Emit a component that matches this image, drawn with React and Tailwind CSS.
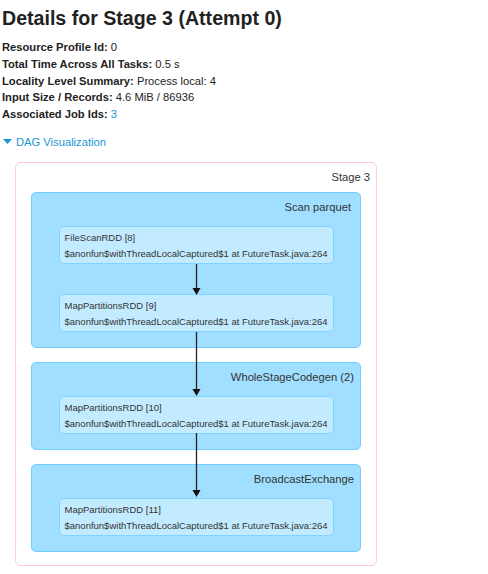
const nodes = {
  n8: "FileScanRDD [8]",
  n9: "MapPartitionsRDD [9]",
  n10: "MapPartitionsRDD [10]",
  n11: "MapPartitionsRDD [11]",
};

const callSite = "$anonfun$withThreadLocalCaptured$1 at FutureTask.java:264";

function RddNode({ name }) {
  return (
    <div className="mx-auto w-[275px] h-[38px] rounded-[5px] border border-[#80d4ff] bg-[#c3ebff] pl-[5px] text-[9.5px] leading-[16px] text-[#333] pt-[3px] whitespace-nowrap">
      <div>{name}</div>
      <div>{callSite}</div>
    </div>
  );
}

function Cluster({ label, pr, children }) {
  return (
    <div className="rounded-[5px] border border-[#6fcfff] bg-[#a0dfff] pb-[15px]">
      <div className={`h-[33px] pt-[6px] text-right text-[11.2px] leading-[17px] text-[#333] ${pr}`}>{label}</div>
      {children}
    </div>
  );
}

function Arrows() {
  // edges between RDD nodes, drawn over the clusters
  const edges = [
    [101, 132],
    [169, 233],
    [270, 334],
  ];
  return (
    <svg className="absolute left-0 top-0 pointer-events-none" width="362" height="404">
      {edges.map(([y1, y2], i) => (
        <g key={i}>
          <line x1="180.5" y1={y1} x2="180.5" y2={y2 - 6} stroke="#222" strokeWidth="1.3" />
          <path d={`M176.5 ${y2 - 7} L184.5 ${y2 - 7} L180.5 ${y2} Z`} fill="#111" />
        </g>
      ))}
    </svg>
  );
}

export default function App() {
  return (
    <div className="min-h-[574px] bg-white font-['Liberation_Sans',Arial,sans-serif] text-[#222]">
      <h3 className="pl-[2px] pt-[6px] text-[19.6px] leading-[24px] font-bold text-[#222]">Details for Stage 3 (Attempt 0)</h3>
      <ul className="mt-[9px] pl-[2px] text-[11.2px] leading-[16.75px]">
        <li><strong>Resource Profile Id:</strong> 0</li>
        <li><strong>Total Time Across All Tasks:</strong> 0.5 s</li>
        <li><strong>Locality Level Summary:</strong> Process local: 4</li>
        <li><strong>Input Size / Records:</strong> 4.6 MiB / 86936</li>
        <li><strong>Associated Job Ids:</strong> <a className="text-[#1b95d4]">3</a></li>
      </ul>
      <div className="mt-[11px] flex items-center pl-[3px] text-[11.2px] leading-[17px] text-[#1b95d4]">
        <svg width="9" height="6" className="mr-[4px]"><path d="M0 0 L9 0 L4.5 5 Z" fill="#1b95d4" /></svg>
        <span>DAG Visualization</span>
      </div>
      <div className="relative ml-[15px] mt-[11px] w-[362px] h-[404px] rounded-[5px] border border-[#ffcbd4] bg-white px-[15px]">
        <div className="h-[29px] pt-[6px] text-right text-[11.2px] leading-[17px] text-[#333] -mr-[9px]">Stage 3</div>
        <div className="flex flex-col gap-[14px]">
          <Cluster label="Scan parquet" pr="pr-[9px]">
            <RddNode name={nodes.n8} />
            <div className="h-[30px]" />
            <RddNode name={nodes.n9} />
          </Cluster>
          <Cluster label="WholeStageCodegen (2)" pr="pr-[6px]">
            <RddNode name={nodes.n10} />
          </Cluster>
          <Cluster label="BroadcastExchange" pr="pr-[6px]">
            <RddNode name={nodes.n11} />
          </Cluster>
        </div>
        <Arrows />
      </div>
    </div>
  );
}
